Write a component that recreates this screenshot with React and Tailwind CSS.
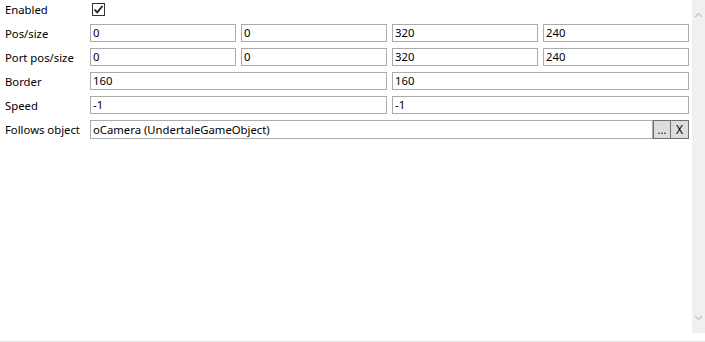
const Field = ({ value }) => (
  <div className="h-[18px] border border-[#ababab] bg-white pl-[2px] text-[11.3px] leading-[16px] text-black overflow-hidden whitespace-nowrap">
    {value}
  </div>
);

const Row = ({ label, children }) => (
  <div className="flex items-center h-[18px]">
    <div className="w-[85px] shrink-0 text-[11.3px] leading-[18px] pt-[1px] text-black">{label}</div>
    <div className="flex-1">{children}</div>
  </div>
);

const App = () => {
  return (
    <div className="w-[705px] h-[342px] bg-white flex flex-col" style={{ fontFamily: '"Noto Sans", "Open Sans", sans-serif' }}>
      <div className="flex h-[341px]">
        {/* editor rows */}
        <div className="flex-1 pl-[5px] pr-[3px] flex flex-col gap-[6px]">
          <Row label="Enabled">
            <div className="ml-[2px] mt-[1px] w-[13px] h-[13px] border border-[#333] bg-white flex items-center justify-center">
              <svg width="11" height="11" viewBox="0 0 11 11">
                <path d="M1.5 5.5 L4.2 8.3 L9.5 2" fill="none" stroke="#222" strokeWidth="1.8" />
              </svg>
            </div>
          </Row>
          <Row label="Pos/size">
            <div className="grid grid-cols-4 gap-[5px]">
              <Field value="0" />
              <Field value="0" />
              <Field value="320" />
              <Field value="240" />
            </div>
          </Row>
          <Row label="Port pos/size">
            <div className="grid grid-cols-4 gap-[5px]">
              <Field value="0" />
              <Field value="0" />
              <Field value="320" />
              <Field value="240" />
            </div>
          </Row>
          <Row label="Border">
            <div className="grid grid-cols-2 gap-[5px]">
              <Field value="160" />
              <Field value="160" />
            </div>
          </Row>
          <Row label="Speed">
            <div className="grid grid-cols-2 gap-[5px]">
              <Field value="-1" />
              <Field value="-1" />
            </div>
          </Row>
          <Row label="Follows object">
            <div className="flex h-[19px]">
              <div className="flex-1 h-[19px] border border-[#ababab] pl-[2px] text-[11.3px] leading-[17px] text-black">
                oCamera (UndertaleGameObject)
              </div>
              <button className="w-[18px] h-[19px] border border-[#707070] bg-[#dddddd] text-[11px] leading-[15px] text-black">...</button>
              <button className="w-[18px] h-[19px] border border-[#707070] border-l-0 bg-[#dddddd] text-[12px] leading-[17px] text-black">X</button>
            </div>
          </Row>
        </div>
        {/* scrollbar */}
        <div className="w-[13px] h-[333px] bg-[#f0f0f0] flex flex-col justify-between items-center py-[12px]">
          <svg width="9" height="6" viewBox="0 0 9 6">
            <path d="M1 5 L4.5 1.5 L8 5" fill="none" stroke="#c2c2c2" strokeWidth="1.2" />
          </svg>
          <svg width="9" height="6" viewBox="0 0 9 6">
            <path d="M1 1 L4.5 4.5 L8 1" fill="none" stroke="#c2c2c2" strokeWidth="1.2" />
          </svg>
        </div>
      </div>
      <div className="h-[1px] bg-[#e3e3e3]" />
    </div>
  );
};

export default App;
